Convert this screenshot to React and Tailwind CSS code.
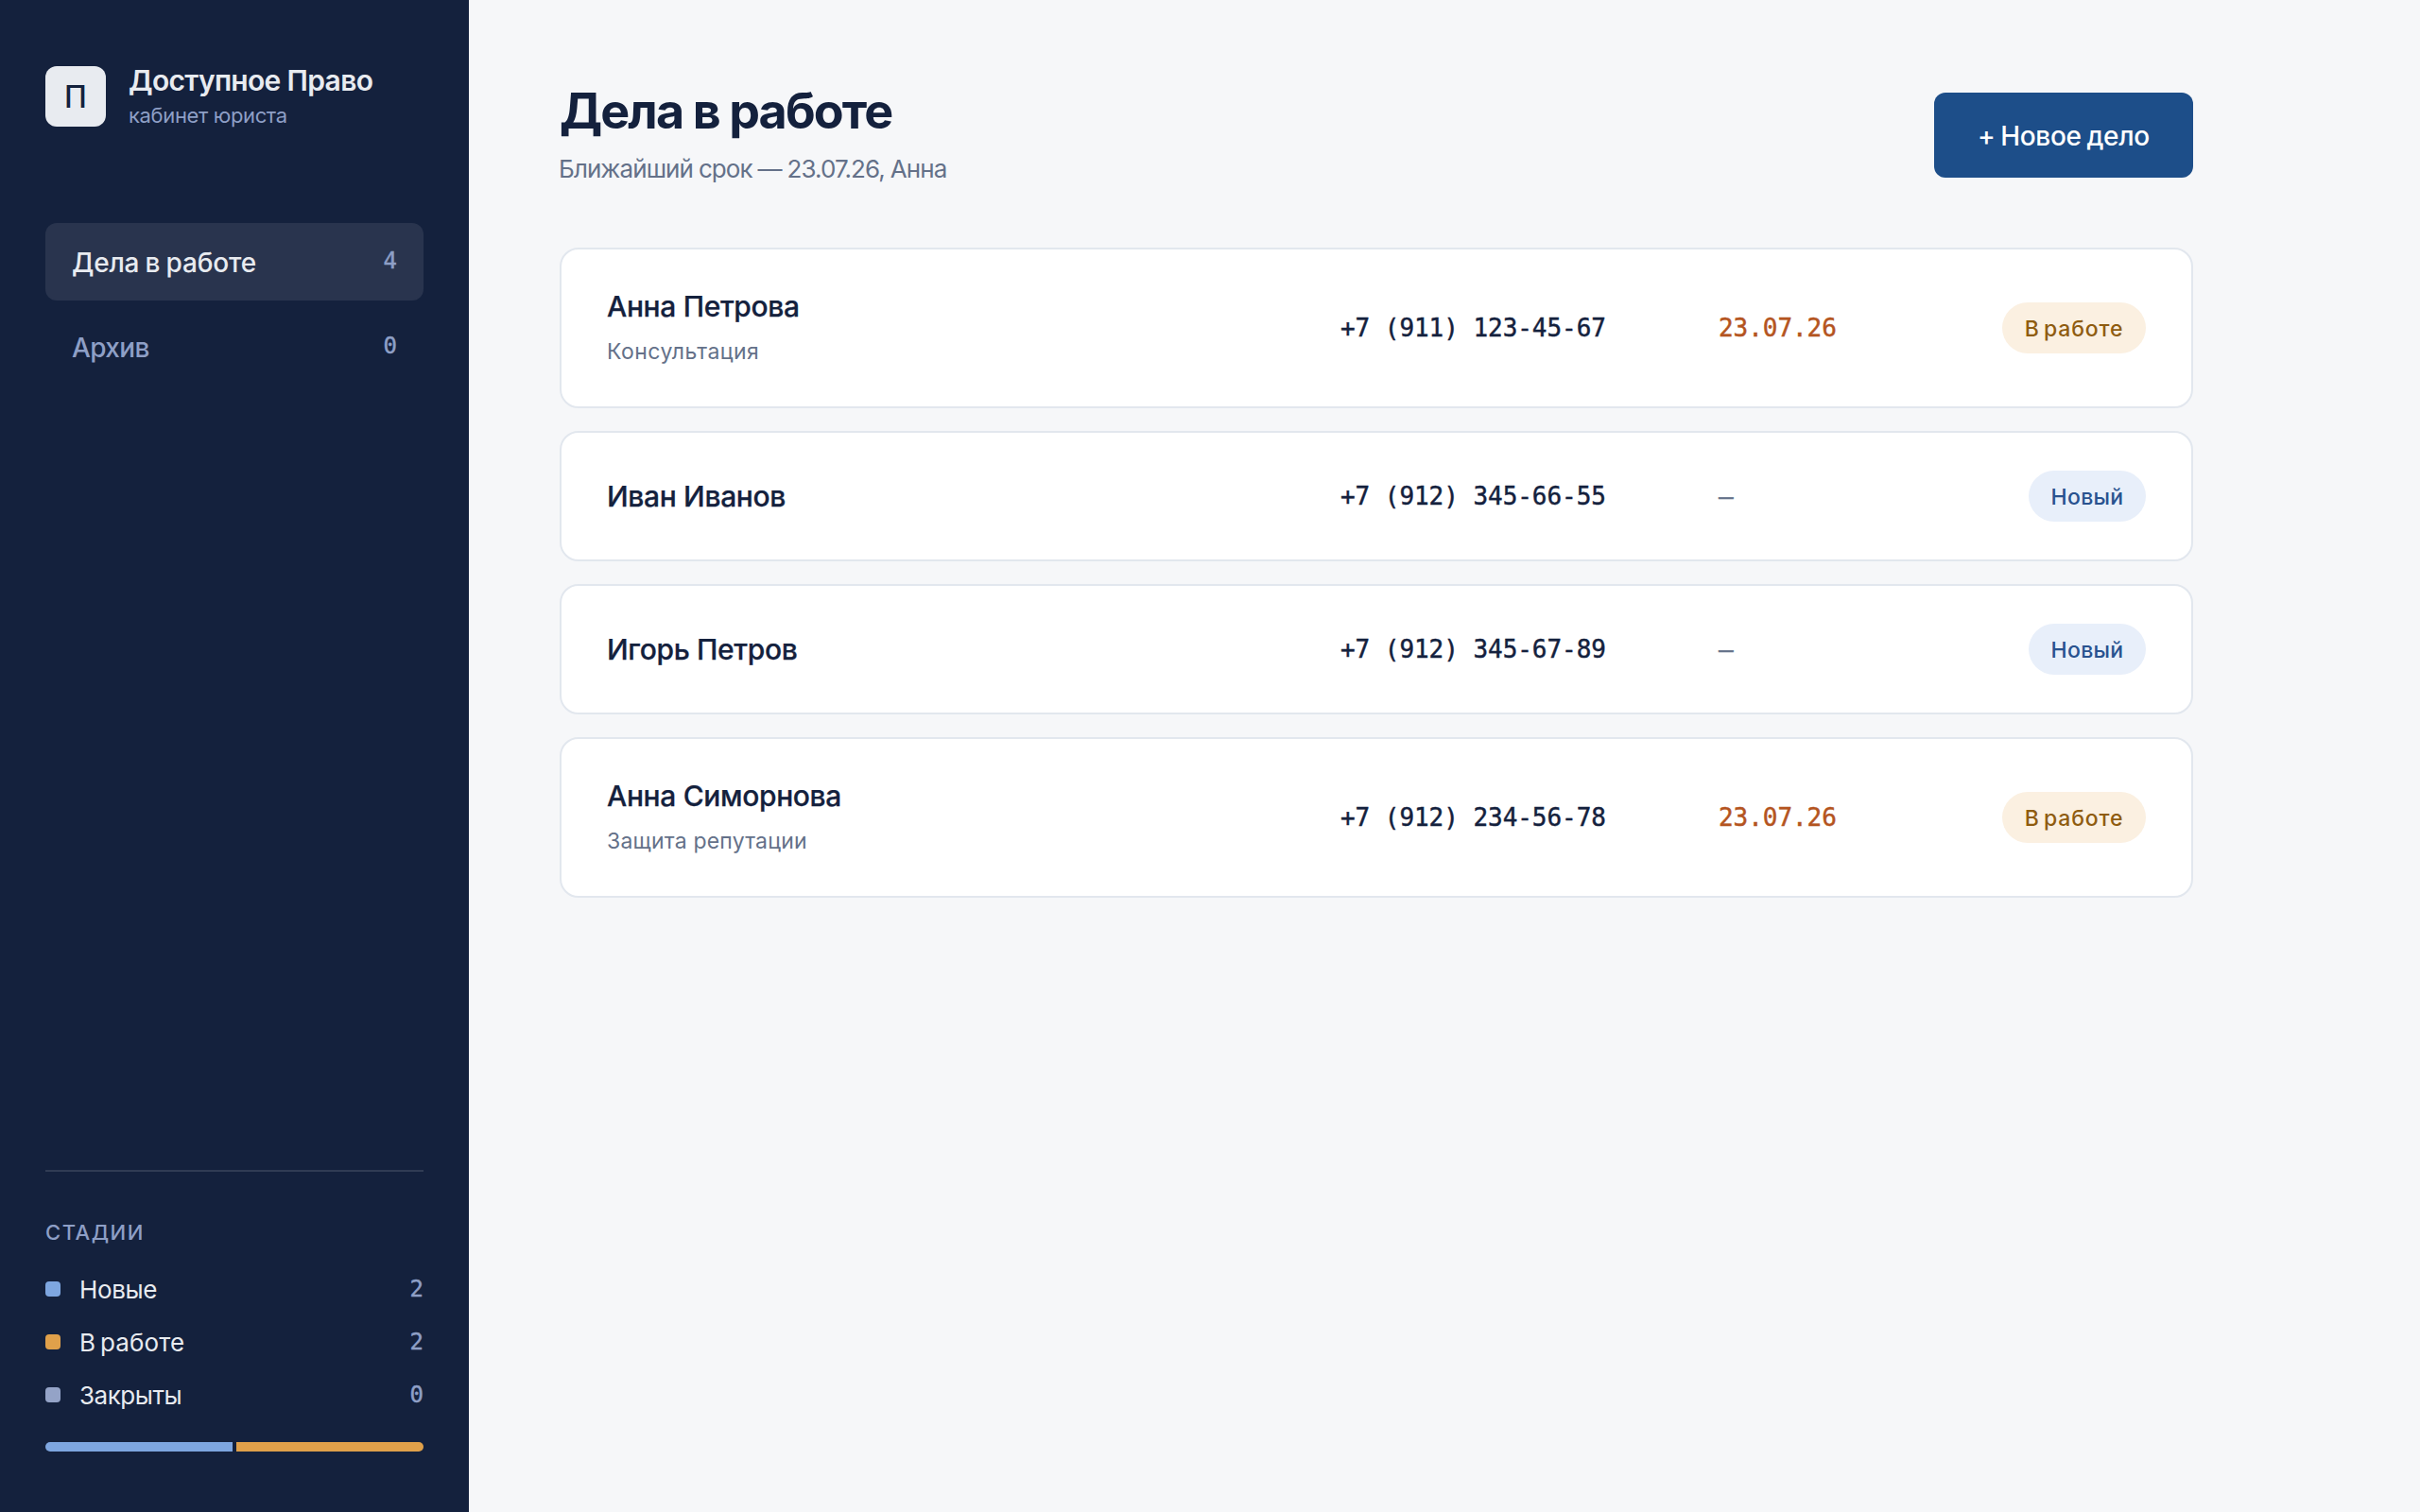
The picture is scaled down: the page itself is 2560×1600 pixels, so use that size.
const NAV = [
  { label: "Дела в работе", count: 4, active: true },
  { label: "Архив", count: 0, active: false },
];

const STAGES = [
  { label: "Новые", count: 2, dot: "bg-[#7ea6e0]", tracking: "tracking-[-0.35px]" },
  { label: "В работе", count: 2, dot: "bg-[#e0a04a]", tracking: "tracking-[0.1px] [word-spacing:-2.5px]" },
  { label: "Закрыты", count: 0, dot: "bg-[#94a3c7]", tracking: "tracking-[-0.47px]" },
];

const CASES = [
  { name: "Анна Петрова", topic: "Консультация", phone: "+7 (911) 123-45-67", due: "23.07.26", status: "work", tracking: "tracking-[0.45px]" },
  { name: "Иван Иванов", phone: "+7 (912) 345-66-55", status: "new" },
  { name: "Игорь Петров", phone: "+7 (912) 345-67-89", status: "new" },
  { name: "Анна Симорнова", topic: "Защита репутации", phone: "+7 (912) 234-56-78", due: "23.07.26", status: "work", tracking: "tracking-[0.2px]" },
];

const STATUS = {
  work: { label: "В работе", style: "bg-[#fbf0e1] text-[#8f5c10] tracking-[0.8px] [word-spacing:-2.5px] w-[152px]" },
  new: { label: "Новый", style: "bg-[#e8effa] text-[#29528f] tracking-[0.3px] w-[124px]" },
};

const mono = "font-['DejaVu_Sans_Mono',monospace] [-webkit-text-stroke:0.45px_currentColor]";

function Sidebar() {
  return (
    <aside className="flex w-[496px] shrink-0 flex-col bg-[#14213d] px-12 pb-16 pt-[67px]">
      <div className="flex items-center gap-6">
        <div className="flex size-16 items-center justify-center rounded-xl bg-[#e8ebf0] pt-0.5 text-[32px] font-medium leading-none text-[#14213d]">
          П
        </div>
        <div className="flex flex-col gap-1 whitespace-nowrap">
          <div className="text-[30px] font-semibold leading-9 tracking-[-0.68px] text-[#e8ebf0]">Доступное Право</div>
          <div className="text-[22px] leading-[30px] tracking-[-0.36px] text-[#8e9fc6]">кабинет юриста</div>
        </div>
      </div>

      <nav className="mt-[99px] flex flex-col gap-2">
        {NAV.map((item) => (
          <a
            key={item.label}
            className={`flex h-[82px] items-center justify-between rounded-xl px-7 pt-0.5 text-[28px] font-medium leading-9 ${
              item.active
                ? "bg-[#29344e] tracking-[-0.2px] text-[#e8ebf0] [word-spacing:-1px]"
                : "tracking-[-0.65px] text-[#8e9fc6]"
            }`}
          >
            <span>{item.label}</span>
            <span className={`${mono} mb-1 text-[24px] leading-8 tracking-normal text-[#8e9fc6]`}>{item.count}</span>
          </a>
        ))}
      </nav>

      <section className="mt-auto border-t-2 border-[#303c54] pt-12">
        <h2 className="text-[22px] font-medium leading-8 tracking-[1.5px] text-[#8e9fc6]">СТАДИИ</h2>
        <ul className="mt-[26px] flex flex-col gap-5">
          {STAGES.map((stage) => (
            <li key={stage.label} className="flex h-9 items-center">
              <span className={`size-4 rounded ${stage.dot}`} />
              <span className={`-mb-px ml-5 grow text-[26px] leading-9 text-[#e8ebf0] ${stage.tracking}`}>
                {stage.label}
              </span>
              <span className={`${mono} text-[24px] leading-8 text-[#8e9fc6]`}>{stage.count}</span>
            </li>
          ))}
        </ul>
        <div className="mt-8 flex h-2.5 gap-1 overflow-hidden rounded-full">
          <div className="grow bg-[#7ea6e0]" />
          <div className="grow bg-[#e0a04a]" />
        </div>
      </section>
    </aside>
  );
}

function CaseRow({ item }) {
  const status = STATUS[item.status];
  return (
    <article
      className={`flex items-center rounded-[20px] border-2 border-[#e2e7ee] bg-white px-12 ${
        item.topic ? "h-[170px]" : "h-[138px]"
      }`}
    >
      <div className="w-[776px] shrink-0">
        <div className="text-[30px] font-medium leading-10 tracking-[-0.35px] text-[#14213d] [-webkit-text-stroke:0.25px_currentColor]">
          {item.name}
        </div>
        {item.topic && (
          <div className={`mb-[3px] mt-3 text-[23px] leading-8 text-[#647189] ${item.tracking}`}>{item.topic}</div>
        )}
      </div>
      <div className={`${mono} w-[400px] shrink-0 whitespace-pre text-[26px] leading-9 tracking-[-0.05px] text-[#14213d]`}>
        {item.phone}
      </div>
      <div className={`${mono} grow text-[26px] leading-9 tracking-[-0.05px] ${item.due ? "text-[#b45420]" : "text-[#647189]"}`}>
        {item.due ?? "—"}
      </div>
      <span
        className={`flex h-[54px] items-center justify-center rounded-full pt-0.5 text-[23px] font-medium leading-none ${status.style}`}
      >
        {status.label}
      </span>
    </article>
  );
}

export default function App() {
  return (
    <div className="flex h-screen w-full bg-[#f6f7f9] font-['Inter',sans-serif]">
      <Sidebar />
      <main className="w-[1920px] px-24 pt-[85px]">
        <header className="flex h-[116px] items-center justify-between">
          <div className="mb-[3px]">
            <h1 className="text-[52px] font-bold leading-[64px] tracking-[-1.88px] text-[#14213d]">Дела в работе</h1>
            <p className="-ml-px mt-[11px] text-[26px] leading-9 tracking-[-0.92px] text-[#647189] [word-spacing:-0.5px]">
              Ближайший срок — 23.07.26, Анна
            </p>
          </div>
          <button className="h-[90px] w-[274px] rounded-xl bg-[#1d4e89] pt-0.5 text-[28px] font-medium leading-9 tracking-[-0.3px] text-white [word-spacing:-1.5px]">
            + Новое дело
          </button>
        </header>
        <div className="mt-[61px] flex flex-col gap-6">
          {CASES.map((item) => (
            <CaseRow key={item.name} item={item} />
          ))}
        </div>
      </main>
    </div>
  );
}
